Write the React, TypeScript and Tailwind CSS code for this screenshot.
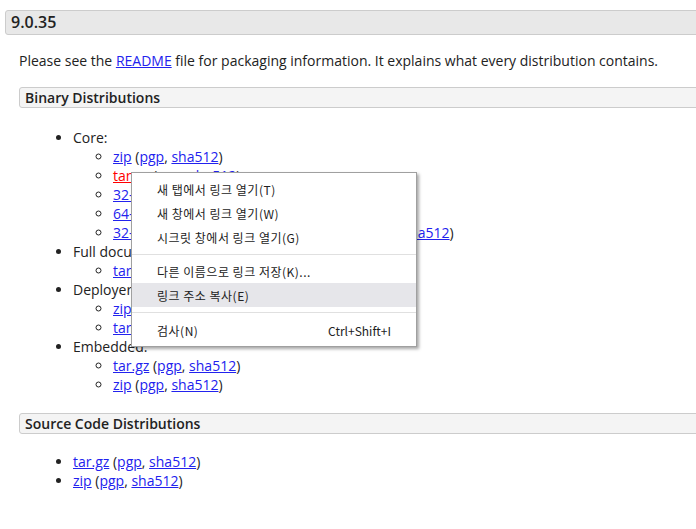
import React from "react";

const linkCls = "text-[#2222ee] underline";

function Files({ name, active }: { name: string; active?: boolean }) {
  return (
    <>
      <a className={active ? "text-[#ff0000] underline" : linkCls}>{name}</a> (
      <a className={linkCls}>pgp</a>, <a className={linkCls}>sha512</a>)
    </>
  );
}

function MenuItem({ label, hint, hot }: { label: string; hint?: string; hot?: boolean }) {
  return (
    <div
      className={
        "h-[24px] flex items-center justify-between pl-[25px] pr-[25px] " +
        (hot ? "bg-[#e6e6ea]" : "")
      }
    >
      <span className="tracking-[0.5px]">{label}</span>
      {hint && <span>{hint}</span>}
    </div>
  );
}

export default function App() {
  return (
    <div className="relative w-[696px] h-[529px] overflow-hidden bg-white text-[14px] leading-[19px] text-[#222] font-['Open_Sans',sans-serif]">
      <div className="pl-[5px] pt-[10px]">
        {/* version header */}
        <div className="w-[720px] h-[25px] border border-[#cccccc] bg-[#e8e8e8] rounded-[3px] px-[5px] text-[16px] leading-[23px] font-semibold text-[#222]">
          9.0.35
        </div>

        <div className="pl-[14px]">
          <p className="mt-[16px]">
            Please see the <a className={linkCls}>README</a> file for packaging information. It explains what
            every distribution contains.
          </p>

          <div className="mt-[17px] w-[700px] h-[21px] border border-[#cccccc] bg-[#f4f4f4] rounded-[3px] px-[5px] leading-[19px] font-semibold">
            Binary Distributions
          </div>

          <ul className="mt-[20px] pl-[54px] list-disc">
            <li>
              Core:
              <ul className="pl-[40px] list-[circle]">
                <li><Files name="zip" /></li>
                <li><Files name="tar.gz" active /></li>
                <li><Files name="32-bit Windows zip" /></li>
                <li><Files name="64-bit Windows zip" /></li>
                <li><Files name="32-bit/64-bit Windows Service Installer" /></li>
              </ul>
            </li>
            <li>
              Full documentation:
              <ul className="pl-[40px] list-[circle]">
                <li><Files name="tar.gz" /></li>
              </ul>
            </li>
            <li>
              Deployer:
              <ul className="pl-[40px] list-[circle]">
                <li><Files name="zip" /></li>
                <li><Files name="tar.gz" /></li>
              </ul>
            </li>
            <li>
              Embedded:
              <ul className="pl-[40px] list-[circle]">
                <li><Files name="tar.gz" /></li>
                <li><Files name="zip" /></li>
              </ul>
            </li>
          </ul>

          <div className="mt-[19px] w-[700px] h-[21px] border border-[#cccccc] bg-[#f4f4f4] rounded-[3px] px-[5px] leading-[19px] font-semibold">
            Source Code Distributions
          </div>

          <ul className="mt-[18px] pl-[54px] list-disc">
            <li><Files name="tar.gz" /></li>
            <li><Files name="zip" /></li>
          </ul>
        </div>
      </div>

      {/* context menu */}
      <div className="absolute left-[131px] top-[172px] w-[286px] border border-[#a0a0a0] bg-white py-[4px] text-[12px] text-[#222] shadow-[2px_2px_3px_rgba(0,0,0,0.35)] font-['Noto_Sans_CJK_KR','Open_Sans',sans-serif]">
        <MenuItem label="새 탭에서 링크 열기(T)" />
        <MenuItem label="새 창에서 링크 열기(W)" />
        <MenuItem label="시크릿 창에서 링크 열기(G)" />
        <div className="h-[10px] flex items-center"><div className="w-full h-px bg-[#e0e0e0]" /></div>
        <MenuItem label="다른 이름으로 링크 저장(K)..." />
        <MenuItem label="링크 주소 복사(E)" hot />
        <div className="h-[11px] flex items-center"><div className="w-full h-px bg-[#e0e0e0]" /></div>
        <MenuItem label="검사(N)" hint="Ctrl+Shift+I" />
      </div>
    </div>
  );
}
